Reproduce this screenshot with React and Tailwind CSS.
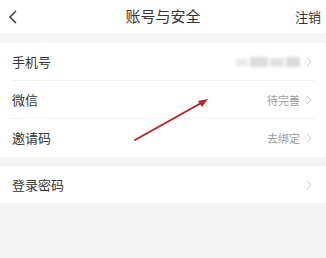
import React from "react";

const font = { fontFamily: '"Noto Sans CJK SC", "Noto Sans", sans-serif' };

function Chevron() {
  return (
    <svg width="6" height="10" viewBox="0 0 6 10" className="ml-[6px]">
      <path d="M1 1 L5 5 L1 9" fill="none" stroke="#c8c8c8" strokeWidth="1" />
    </svg>
  );
}

function Row({ label, value, blur, divider }) {
  return (
    <div className="h-[38px] flex items-center pl-3 pr-[14px] relative">
      <span className="text-[13px] text-[#333]">{label}</span>
      <div className="ml-auto flex items-center">
        {blur && (
          <div className="flex items-center gap-[2px] blur-[1.5px]">
            <div className="w-[12px] h-[7px] bg-[#e8e8e8]" />
            <div className="w-[18px] h-[10px] bg-[#dcdcdc]" />
            <div className="w-[14px] h-[9px] bg-[#e2e2e2]" />
            <div className="w-[14px] h-[10px] bg-[#dadada]" />
          </div>
        )}
        {value && <span className="text-[11px] text-[#9a9a9a]">{value}</span>}
        <Chevron />
      </div>
      {divider && (
        <div className="absolute bottom-0 left-3 right-3 h-px bg-[#f0f0f0]" />
      )}
    </div>
  );
}

export default function App() {
  return (
    <div className="w-[326px] h-[258px] bg-[#f5f5f5] relative overflow-hidden" style={font}>
      <div className="h-[33px] bg-white flex items-center px-2 relative">
        <svg width="10" height="14" viewBox="0 0 10 14">
          <path d="M8 1 L2 7 L8 13" fill="none" stroke="#333" strokeWidth="1.4" />
        </svg>
        <div className="absolute left-0 right-0 text-center text-[15px] text-[#333]">
          账号与安全
        </div>
        <span className="ml-auto text-[13px] text-[#333] mr-[-3px]">注销</span>
      </div>
      <div className="mt-[10px] bg-white">
        <Row label="手机号" blur divider />
        <Row label="微信" value="待完善" divider />
        <Row label="邀请码" value="去绑定" />
      </div>
      <div className="mt-[9px] bg-white">
        <div className="h-[37px] flex items-center pl-3 pr-[14px]">
          <span className="text-[13px] text-[#333]">登录密码</span>
          <div className="ml-auto flex items-center">
            <Chevron />
          </div>
        </div>
      </div>
      <svg className="absolute left-0 top-0 pointer-events-none" width="326" height="258">
        <line x1="135" y1="140" x2="203" y2="102" stroke="#b3232a" strokeWidth="2" strokeLinecap="round" />
        <path d="M208 99 L198 101 L202 107 Z" fill="#b3232a" />
      </svg>
    </div>
  );
}
